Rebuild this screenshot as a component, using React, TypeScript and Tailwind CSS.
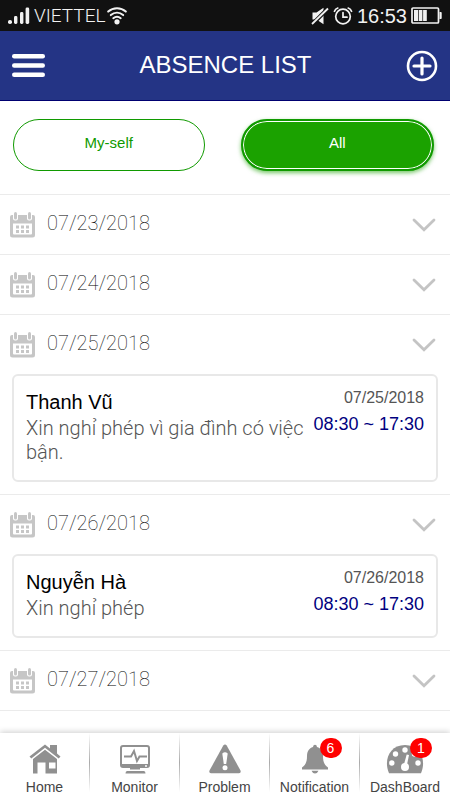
import type { ReactNode } from "react";

type Absence = { name: string; reason: string; date: string; time: string };
type Day = { date: string; items: Absence[] };

const days: Day[] = [
  { date: "07/23/2018", items: [] },
  { date: "07/24/2018", items: [] },
  {
    date: "07/25/2018",
    items: [
      {
        name: "Thanh Vũ",
        reason: "Xin nghỉ phép vì gia đình có việc bận.",
        date: "07/25/2018",
        time: "08:30 ~ 17:30",
      },
    ],
  },
  {
    date: "07/26/2018",
    items: [
      {
        name: "Nguyễn Hà",
        reason: "Xin nghỉ phép",
        date: "07/26/2018",
        time: "08:30 ~ 17:30",
      },
    ],
  },
  { date: "07/27/2018", items: [] },
];

function StatusBar() {
  return (
    <div className="flex h-[31px] items-center bg-[#111111] px-2 text-[#f2f2f2]">
      <svg width="22" height="18" viewBox="0 0 22 18" fill="currentColor" aria-hidden="true">
        <rect x="0" y="13" width="4" height="4" rx="1.8" />
        <rect x="6" y="9" width="3.4" height="8" rx="1.4" />
        <rect x="12" y="5" width="3.4" height="12" rx="1.4" />
        <rect x="17.6" y="0.5" width="3.6" height="16.5" rx="1.4" />
      </svg>
      <span className="ml-1 font-['Roboto','Liberation_Sans',sans-serif] text-[19px] leading-6 font-light">
        VIETTEL
      </span>
      <svg
        className="ml-0.5"
        width="20"
        height="18"
        viewBox="0 0 20 18"
        fill="none"
        stroke="currentColor"
        strokeWidth="2"
        strokeLinecap="round"
        aria-hidden="true"
      >
        <path d="M1.2 4.6C6.2.1 13.8.1 18.8 4.6" />
        <path d="M3.8 8.1c3.7-3.2 8.7-3.2 12.4 0" />
        <path d="M6.3 11.2c2.3-1.9 5.1-1.9 7.4 0" />
        <circle cx="10" cy="14.8" r="2.6" fill="currentColor" stroke="none" />
      </svg>
      <div className="ml-auto flex items-center">
        <svg width="18" height="18" viewBox="0 0 18 18" fill="currentColor" aria-hidden="true">
          <path d="M1.5 5.5h4L12.5.8v16.4L5.5 12.5h-4z" />
          <path d="M17.2 1.2L1.2 17.4" stroke="#111111" strokeWidth="4" />
          <path d="M17 1.5L1 17" stroke="currentColor" strokeWidth="1.8" />
        </svg>
        <svg
          className="ml-1"
          width="20"
          height="18"
          viewBox="0 0 20 18"
          fill="none"
          stroke="currentColor"
          strokeWidth="1.7"
          strokeLinecap="round"
          aria-hidden="true"
        >
          <circle cx="10" cy="9.5" r="7.3" />
          <path d="M10 5.5v4.7h4M1.5 4.3C2 2.6 3.2 1.5 4.8 1M18.5 4.3C18 2.6 16.8 1.5 15.2 1" />
        </svg>
        <span className="ml-1 text-xl leading-6">16:53</span>
        <svg className="ml-1" width="31" height="17" viewBox="0 0 31 17" aria-hidden="true">
          <rect x="1" y="1" width="26.5" height="15" rx="1" fill="none" stroke="currentColor" strokeWidth="1.7" />
          <path d="M28.5 5h1.5q.7 0 .7 1v5q0 1-.7 1h-1.5z" fill="currentColor" />
          <path d="M3 3h4v11H3zM7.7 3h3.7v11H7.7zM12.1 3h3.7v11h-3.7z" fill="currentColor" />
        </svg>
      </div>
    </div>
  );
}

function CalendarIcon() {
  return (
    <svg width="25" height="26" viewBox="0 0 25 26" aria-hidden="true">
      <path
        fill="#c6c6c6"
        fillRule="evenodd"
        d="M0 5q0-2 2-2h21q2 0 2 2v18q0 2.5-2.5 2.5h-20Q0 25.5 0 23zM3 11.5v10q0 1 1 1h17q1 0 1-1v-10z"
      />
      <rect x="3" y="-1" width="5" height="9.5" rx="2" fill="#fff" />
      <rect x="17" y="-1" width="5" height="9.5" rx="2" fill="#fff" />
      <rect x="4" y="0" width="3" height="7.5" rx="1.5" fill="#c6c6c6" />
      <rect x="18" y="0" width="3" height="7.5" rx="1.5" fill="#c6c6c6" />
      <path
        fill="#c6c6c6"
        d="M6 13.5h3v3H6zM11 13.5h3v3h-3zM16 13.5h3v3h-3zM6 18h3v3H6zM11 18h3v3h-3zM16 18h3v3h-3z"
      />
    </svg>
  );
}

function AbsenceCard({ item }: { item: Absence }) {
  return (
    <article className="mx-3 mb-3 flex justify-between rounded-md border-2 border-[#e8e8e8] px-3 pt-3 pb-4">
      <div className="min-w-0 flex-1">
        <h2 className="text-xl leading-7 text-black">{item.name}</h2>
        <p className="font-['Roboto','Liberation_Sans',sans-serif] text-xl leading-6 font-light text-[#555555]">
          {item.reason}
        </p>
      </div>
      <div className="shrink-0 text-right">
        <p className="text-base leading-5 text-[#555555]">{item.date}</p>
        <p className="mt-1 text-lg leading-6 text-[#000080]">{item.time}</p>
      </div>
    </article>
  );
}

function DaySection({ day }: { day: Day }) {
  return (
    <section className="border-t border-[#ebebeb]">
      <button type="button" className="flex h-[59px] w-full items-center pr-3.5 pl-2.5">
        <CalendarIcon />
        <span className="ml-3 pb-1 font-['Roboto','Liberation_Sans',sans-serif] text-xl leading-6 font-thin text-black">
          {day.date}
        </span>
        <svg
          className="ml-auto"
          width="24"
          height="14"
          viewBox="0 0 24 14"
          fill="none"
          stroke="#c4c4c4"
          strokeWidth="2.8"
          strokeLinecap="round"
          aria-hidden="true"
        >
          <path d="M2 2L12 11.8 22 2" />
        </svg>
      </button>
      {day.items.map((item) => (
        <AbsenceCard key={item.name} item={item} />
      ))}
    </section>
  );
}

const homeIcon = (
  <svg width="32" height="30" viewBox="0 0 32 30" fill="currentColor" aria-hidden="true">
    <path d="M21 1h7v8.5l3.5 3-1.8 2L16 3.7 2.3 14.5l-1.8-2L16 .5l5 4z" />
    <path fillRule="evenodd" d="M16 5.7L28 15v14.5H16.5v-11h-8v11H4V15zM20 18.5v6h6.5v-6z" />
  </svg>
);

const monitorIcon = (
  <svg width="32" height="30" viewBox="0 0 32 30" fill="currentColor" aria-hidden="true">
    <path
      fillRule="evenodd"
      d="M4 1h24q3 0 3 3v17q0 3-3 3H4q-3 0-3-3V4q0-3 3-3zM4 3q-1 0-1 1v16h26V4q0-1-1-1zM26 21.3v1.4h2v-1.4z"
    />
    <path d="M11 24h10v1.5H11zM8 27h17q1.500 0 1.500 2.500h-20Q6.500 27 8 27z" />
    <path d="M5 12.500h7l3-5.500 3 10 2.500-4.500H28" fill="none" stroke="currentColor" strokeWidth="2" />
  </svg>
);

const problemIcon = (
  <svg width="32" height="30" viewBox="0 0 32 30" fill="currentColor" aria-hidden="true">
    <path d="M14.3 1.5q1.7-2 3.4 0L31.5 26.5q.8 2.5-1.5 2.7H2Q-.3 29 .5 26.5z" />
    <path fill="#fff" d="M13.3 9.5q2.7-2.5 5.4 0l-1.5 10.5h-2.4z" />
    <circle cx="16" cy="23.7" r="2.5" fill="#fff" />
  </svg>
);

const bellIcon = (
  <svg width="32" height="30" viewBox="0 0 32 30" fill="currentColor" aria-hidden="true">
    <path d="M16 .8q1.8 0 2 2.2c4 1.2 6 4.5 6 9 0 5.5 1 8.5 5 11.5v2H3v-2c4-3 5-6 5-11.5 0-4.5 2-7.8 6-9q.2-2.2 2-2.2zM12.5 26.800h7q-1 2.700-3.500 2.700t-3.500-2.700z" />
  </svg>
);

const dashboardIcon = (
  <svg width="38" height="30" viewBox="0 0 38 30" aria-hidden="true">
    <path fill="currentColor" d="M3 29.2C-2.5 17 3 1 19 1s21.5 16 16 28.2z" />
    <g fill="#fff">
      <circle cx="5.8" cy="19" r="2.7" />
      <circle cx="9.5" cy="10" r="2.7" />
      <circle cx="19" cy="6" r="2.7" />
      <circle cx="28.5" cy="10" r="2.7" />
      <circle cx="32" cy="19" r="2.7" />
      <circle cx="19" cy="23" r="4" />
      <path d="M17.5 22l3.2-11.5 2.3.6L20.5 23z" />
    </g>
  </svg>
);

const tabs: { label: string; icon: ReactNode; badge?: number }[] = [
  { label: "Home", icon: homeIcon },
  { label: "Monitor", icon: monitorIcon },
  { label: "Problem", icon: problemIcon },
  { label: "Notification", icon: bellIcon, badge: 6 },
  { label: "DashBoard", icon: dashboardIcon, badge: 1 },
];

function TabBar() {
  return (
    <nav className="sticky bottom-0 flex h-[67px] bg-white shadow-[0_-1px_6px_rgba(0,0,0,0.2)]">
      {tabs.map((tab, index) => (
        <div key={tab.label} className="flex min-w-0 flex-1">
          <a href="#" className="flex min-w-0 flex-1 flex-col items-center pt-[11px] text-[#909090]">
            <span className="relative">
              {tab.icon}
              {tab.badge !== undefined && (
                <span className="absolute -top-1.5 left-[calc(50%+5px)] flex h-5 w-[22px] items-center justify-center rounded-full bg-[#ff0000] text-sm leading-5 text-white">
                  {tab.badge}
                </span>
              )}
            </span>
            <span className="mt-[3px] text-sm leading-5 text-[#444444]">{tab.label}</span>
          </a>
          {index < tabs.length - 1 && (
            <span className="mb-2 w-px bg-linear-to-b from-white via-[#aaaaaa] to-white" />
          )}
        </div>
      ))}
    </nav>
  );
}

export default function App() {
  return (
    <div className="flex min-h-screen flex-col bg-white font-['Liberation_Sans',Arial,sans-serif]">
      <StatusBar />
      <header className="flex h-[70px] items-center justify-between border-b border-[#000070] bg-[#243485] px-3 text-white">
        <button type="button" aria-label="Menu">
          <svg width="33" height="24" viewBox="0 0 33 24" fill="currentColor" aria-hidden="true">
            <rect y="0" width="33" height="4.5" rx="2.2" />
            <rect y="9.3" width="33" height="4.5" rx="2.2" />
            <rect y="18.5" width="33" height="4.5" rx="2.2" />
          </svg>
        </button>
        <h1 className="pb-0.5 text-2xl leading-8">ABSENCE LIST</h1>
        <button type="button" aria-label="Add absence">
          <svg
            width="32"
            height="32"
            viewBox="0 0 32 32"
            fill="none"
            stroke="currentColor"
            strokeWidth="2.6"
            strokeLinecap="round"
            aria-hidden="true"
          >
            <circle cx="16" cy="16" r="14" />
            <path strokeWidth="3.2" d="M16 8v16M8 16h16" />
          </svg>
        </button>
      </header>
      <main className="flex-1">
        <div className="flex justify-between gap-9 pt-[18px] pr-4 pb-[23px] pl-[13px]">
          <button
            type="button"
            className="h-[52px] flex-1 rounded-full border border-[#109a00] pb-1 text-[15px] leading-5 text-[#109a00]"
          >
            My-self
          </button>
          <button
            type="button"
            className="h-[52px] flex-1 rounded-full border-2 border-[#109a00] bg-[#1ba200] pb-1 text-[15px] leading-5 text-white shadow-[inset_0_0_0_1px_#ffffff,0_2px_4px_rgba(27,162,0,0.6)]"
          >
            All
          </button>
        </div>
        {days.map((day) => (
          <DaySection key={day.date} day={day} />
        ))}
        <div className="border-t border-[#ebebeb]" />
      </main>
      <TabBar />
    </div>
  );
}
